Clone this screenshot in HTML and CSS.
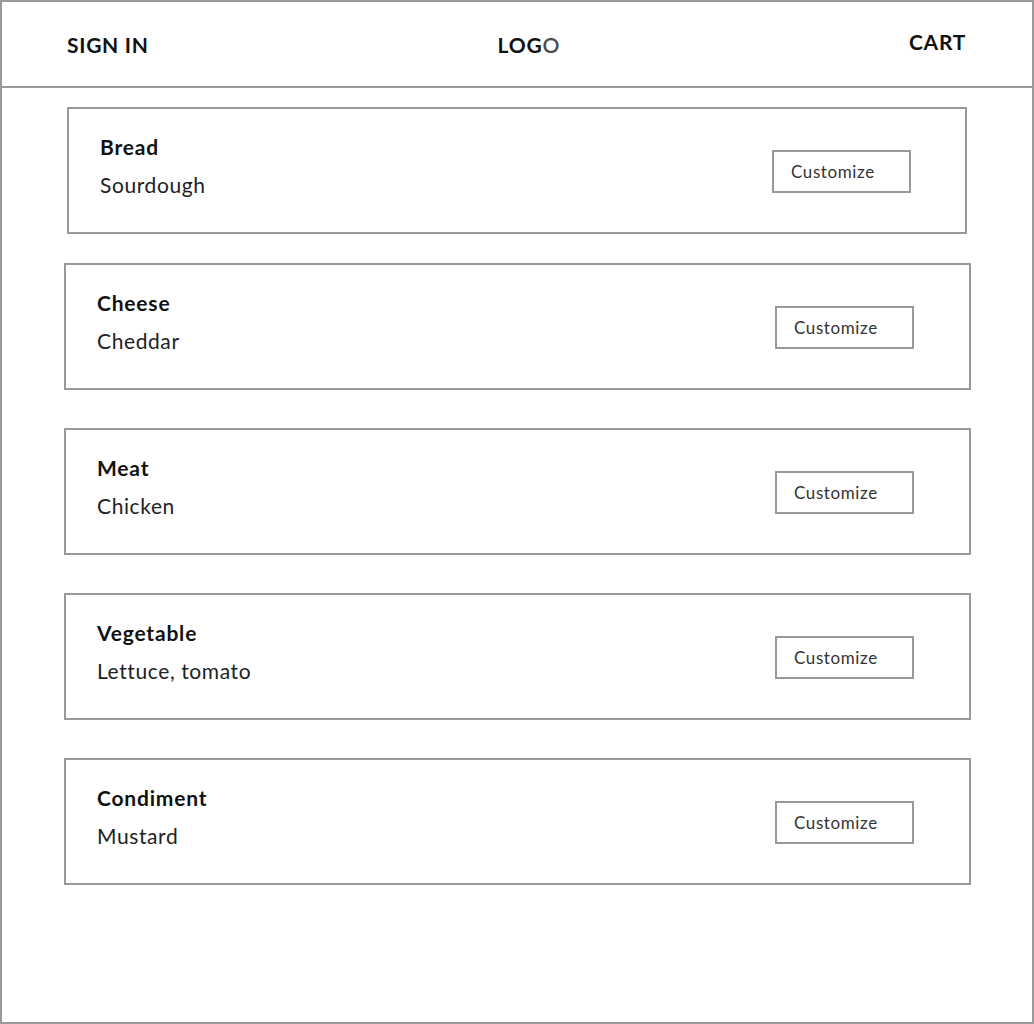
FILE: index.html
```html
<!DOCTYPE html>
<html lang="en">
<head>
<meta charset="utf-8">
<title>Build your sandwich</title>
<link rel="stylesheet" href="styles.css">
</head>
<body>
<div class="frame">
  <header class="topbar">
    <a class="nav-link">SIGN IN</a>
    <div class="logo">LOG<span class="logo-o">O</span></div>
    <a class="nav-link nav-cart">CART</a>
  </header>
  <main class="list">
    <section class="card card-first">
      <div class="card-text">
        <h2 class="card-title">Bread</h2>
        <p class="card-value">Sourdough</p>
      </div>
      <button class="btn">Customize</button>
    </section>
    <section class="card">
      <div class="card-text">
        <h2 class="card-title">Cheese</h2>
        <p class="card-value">Cheddar</p>
      </div>
      <button class="btn">Customize</button>
    </section>
    <section class="card">
      <div class="card-text">
        <h2 class="card-title">Meat</h2>
        <p class="card-value">Chicken</p>
      </div>
      <button class="btn">Customize</button>
    </section>
    <section class="card">
      <div class="card-text">
        <h2 class="card-title">Vegetable</h2>
        <p class="card-value">Lettuce, tomato</p>
      </div>
      <button class="btn">Customize</button>
    </section>
    <section class="card">
      <div class="card-text">
        <h2 class="card-title">Condiment</h2>
        <p class="card-value">Mustard</p>
      </div>
      <button class="btn">Customize</button>
    </section>
  </main>
</div>
</body>
</html>
```
FILE: styles.css
```css
* { box-sizing: border-box; }
html, body { margin: 0; padding: 0; background: #fff; }
body { font-family: "Lato", "Noto Sans", sans-serif; color: #111; }

.frame {
  width: 1034px;
  height: 1024px;
  border: 2px solid #999;
  overflow: hidden;
}

.topbar {
  height: 86px;
  border-bottom: 2px solid #999;
  display: flex;
  justify-content: space-between;
  align-items: flex-start;
  padding: 31px 66px 0 65px;
}
.nav-link {
  font-size: 21px;
  font-weight: 700;
  line-height: 24px;
  color: #111;
  letter-spacing: 0.7px;
}
.nav-cart { margin-top: -3px; }
.logo {
  font-size: 21px;
  font-weight: 700;
  line-height: 24px;
  color: #111;
  letter-spacing: 0.8px;
}
.logo-o { color: #4a4a4a; font-weight: 600; }

.list {
  display: flex;
  flex-direction: column;
  gap: 38px;
  padding-top: 19px;
}
.card {
  margin-left: 62px;
  width: 907px;
  height: 127px;
  border: 2px solid #999;
  display: flex;
  align-items: center;
  justify-content: space-between;
  padding: 0 55px 0 31px;
}
.card-first {
  margin-left: 65px;
  width: 900px;
  margin-bottom: -9px;
  padding-right: 54px;
}
.card-text { display: flex; flex-direction: column; gap: 14px; margin-top: -10px; }
.card-title {
  margin: 0;
  font-size: 21px;
  font-weight: 700;
  line-height: 24px;
  color: #111;
  letter-spacing: 0.8px;
}
.card-value {
  margin: 0;
  font-size: 21px;
  font-weight: 400;
  line-height: 24px;
  color: #222;
  letter-spacing: 0.6px;
}
.btn {
  width: 139px;
  height: 43px;
  border: 2px solid #999;
  background: #fff;
  font-family: inherit;
  font-size: 17px;
  color: #333;
  text-align: left;
  padding: 0 0 0 17px;
  margin-top: 1px;
  letter-spacing: 0.6px;
}
```
